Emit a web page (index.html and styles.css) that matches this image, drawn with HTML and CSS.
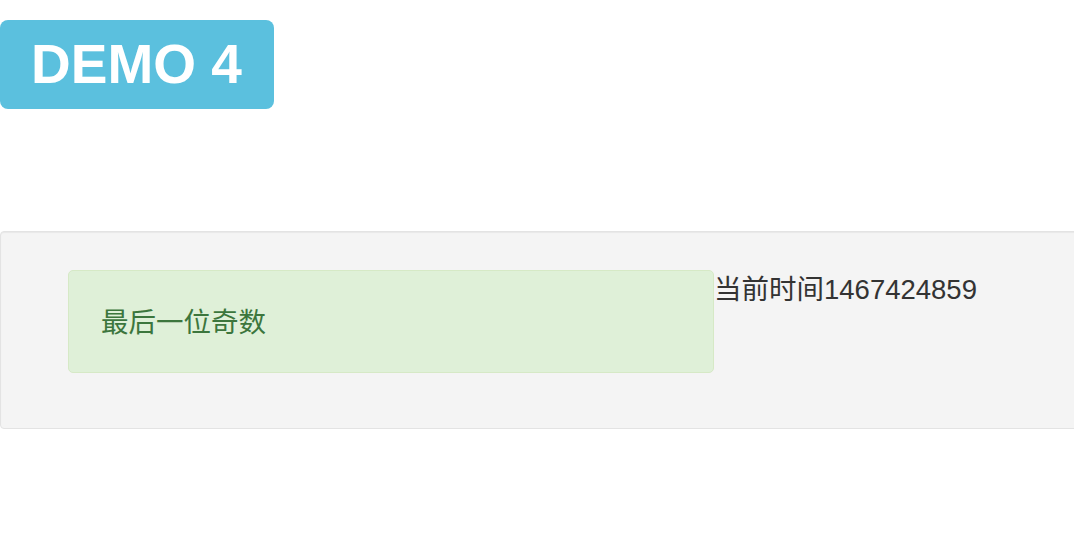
FILE: index.html
```html
<!DOCTYPE html>
<html lang="zh-CN">
<head>
    <meta charset="UTF-8">
    <title>Demo 4</title>
    <link rel="stylesheet" href="styles.css">
</head>
<body>
    <div class="header">
        <span class="label label-info">DEMO 4</span>
    </div>

    <div class="well">
        <div class="alert alert-success">最后一位奇数</div>
        <span class="time">当前时间1467424859</span>
    </div>
</body>
</html>
```
FILE: styles.css
```css
html, body {
    margin: 0;
    overflow: hidden;
}
body {
    font-family: "Liberation Sans", Arial, "Noto Sans CJK SC", sans-serif;
    color: #333;
    background: #fff;
}
.header {
    padding-top: 20px;
    height: 90px;
}
.label {
    display: inline-block;
    box-sizing: border-box;
    height: 89px;
    line-height: 89px;
    padding: 0 32px 0 31px;
    font-size: 55px;
    font-weight: bold;
    color: #fff;
    border-radius: 8px;
}
.label-info {
    background: #5bc0de;
}
.well {
    display: flex;
    align-items: flex-start;
    margin-top: 121px;
    margin-right: -20px;
    height: 158px;
    padding: 38px 0 0 67px;
    background: #f4f4f4;
    border: 1px solid #e3e3e3;
    border-radius: 4px;
    box-shadow: inset 0 1px 1px rgba(0,0,0,0.05);
}
.alert {
    box-sizing: border-box;
    width: 646px;
    height: 103px;
    padding: 0 32px;
    line-height: 103px;
    font-size: 27.5px;
    border: 1px solid;
    border-radius: 5px;
}
.alert-success {
    background: #dff0d8;
    border-color: #d6e9c6;
    color: #3c763d;
}
.time {
    font-size: 27.5px;
    line-height: 40px;
}
```
